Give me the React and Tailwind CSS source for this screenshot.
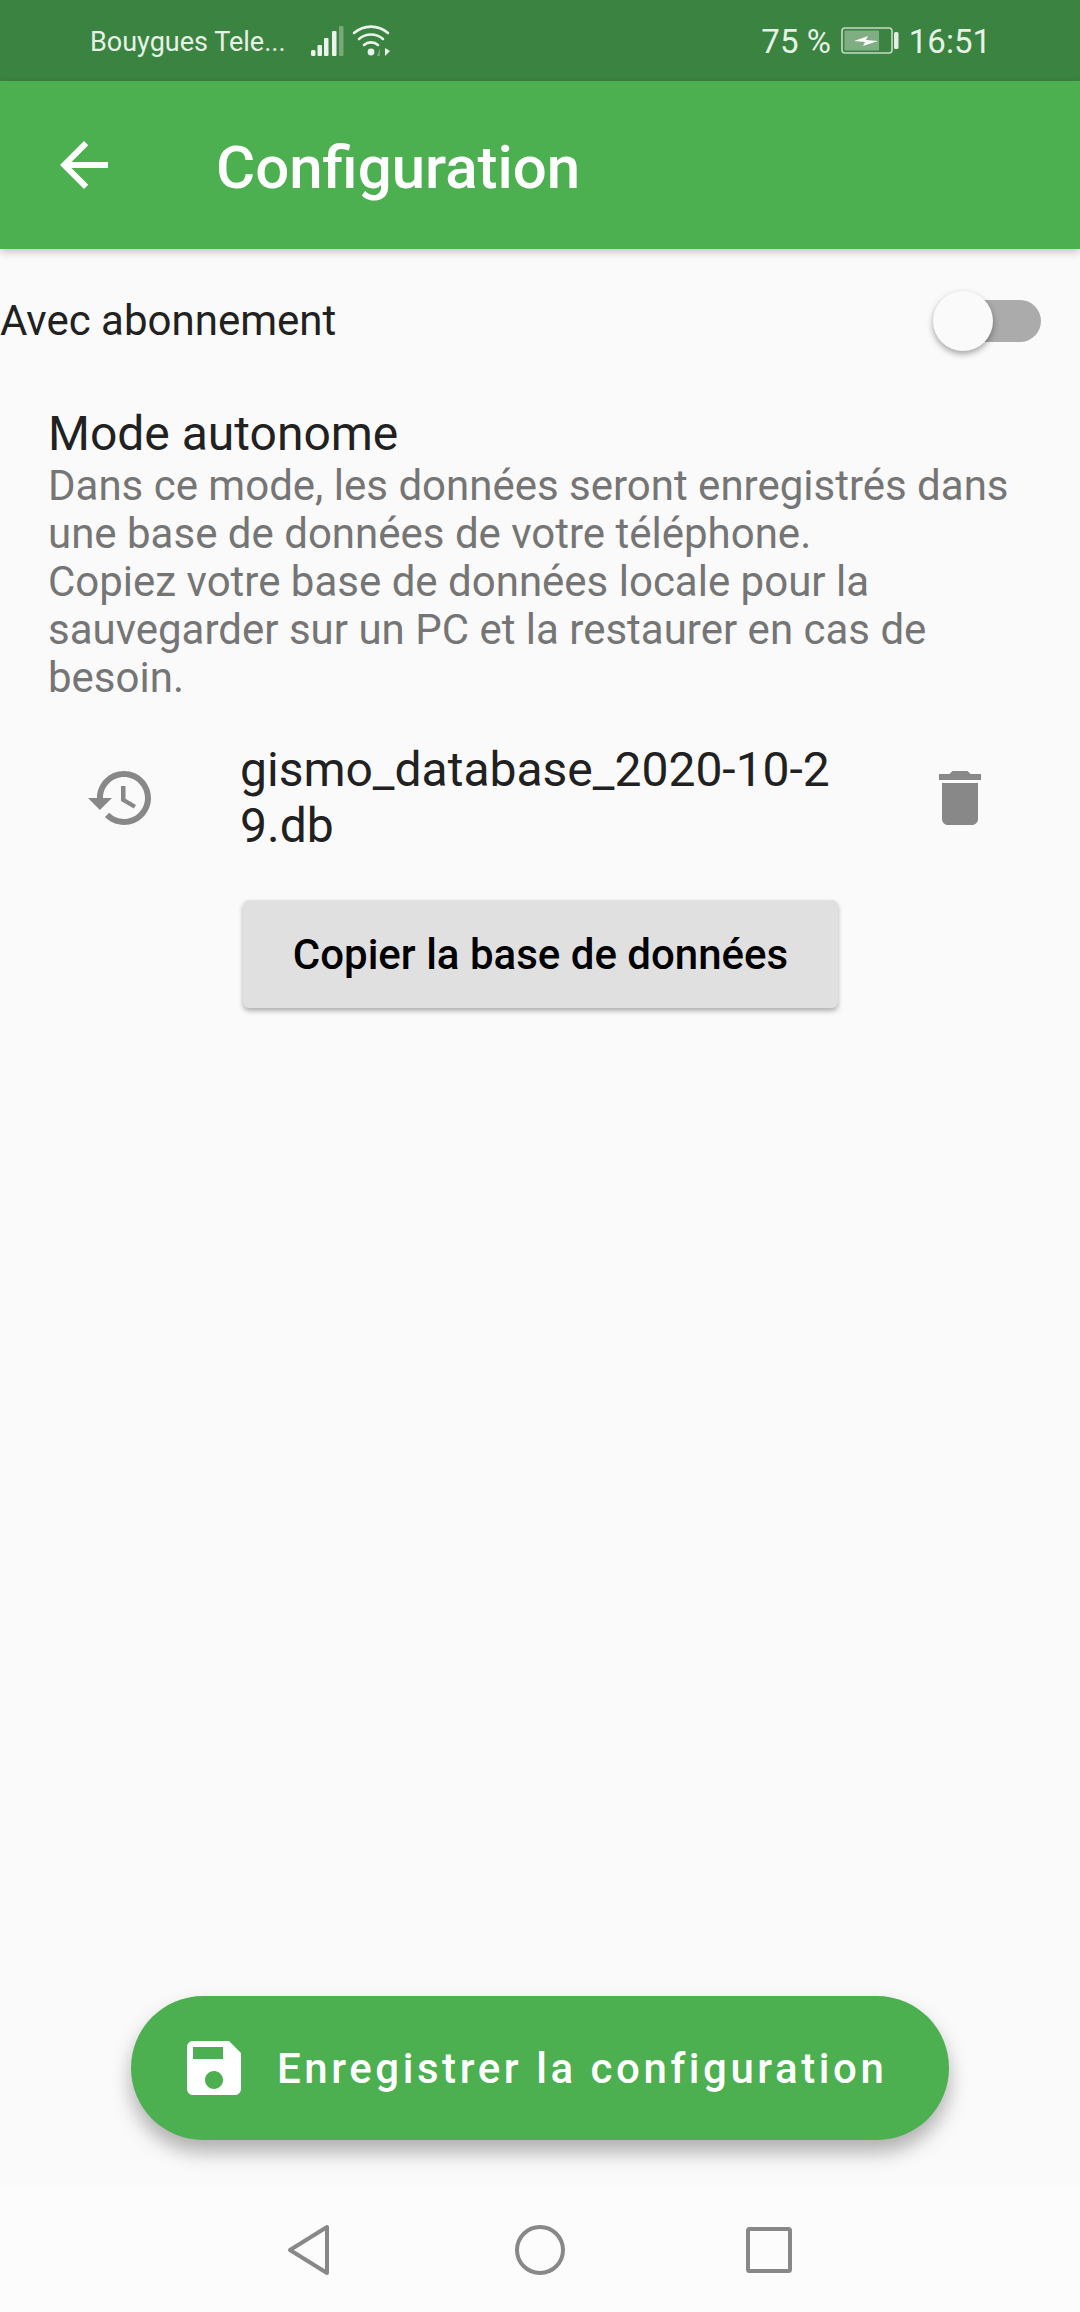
import { useState } from 'react'

const ROBOTO = { fontFamily: 'Roboto, "Noto Sans", sans-serif' }

function MaterialIcon({ d, className }) {
  return (
    <svg viewBox="0 0 24 24" className={className} fill="currentColor">
      <path d={d} />
    </svg>
  )
}

function SignalIcons() {
  return (
    <svg width="84" height="32" viewBox="0 0 84 32" className="ml-[28px] shrink-0">
      <g fill="#fff" fillOpacity="0.9">
        <rect x="1" y="25" width="4.5" height="6" rx="1.5" />
        <rect x="7.5" y="20" width="4.5" height="11" rx="1" />
        <rect x="14" y="13" width="4.5" height="18" rx="1" />
        <rect x="22" y="6" width="4.5" height="25" rx="1" />
      </g>
      <rect x="29" y="1" width="4.5" height="30" rx="1" fill="#fff" fillOpacity="0.3" />
      <g fill="none" stroke="#fff" strokeOpacity="0.9" strokeWidth="2.6" strokeLinecap="round">
        <path d="M44 8 C54 -0.5 68 -0.5 78 8" />
        <path d="M49 14 C56 8 66 8 73 14" />
        <path d="M54 20 C58 16.5 64 16.5 68 20" />
      </g>
      <circle cx="61" cy="27" r="3.4" fill="#fff" fillOpacity="0.9" />
      <path d="M70 23 L70 31 L67 31 Z" fill="#fff" fillOpacity="0.3" />
      <path d="M75 23 L75 31 L80 26 Z" fill="#fff" fillOpacity="0.9" />
    </svg>
  )
}

function BatteryIcon() {
  return (
    <svg width="58" height="28" viewBox="0 0 58 28" className="shrink-0">
      <rect x="1" y="1" width="50" height="25" rx="3" fill="none" stroke="#fff" strokeOpacity="0.7" strokeWidth="1.6" />
      <rect x="3.5" y="3.5" width="34.5" height="20" rx="1" fill="#fff" fillOpacity="0.35" />
      <path d="M13 14 L27 9 L25 13 L37 14 L22 19 L24 15 Z" fill="#fff" fillOpacity="0.95" />
      <rect x="53" y="5" width="4.5" height="17" rx="1.5" fill="#fff" fillOpacity="0.85" />
    </svg>
  )
}

function StatusBar() {
  return (
    <div className="h-[81px] shrink-0 bg-[#3b8340] flex items-center pl-[90px] pr-[89px] text-[#e6f2e6]">
      <span className="text-[27px] leading-none w-[192px] pt-[3px] whitespace-nowrap">Bouygues Tele...</span>
      <SignalIcons />
      <div className="ml-auto flex items-center">
        <span className="text-[33px] leading-none pt-[2px] mr-[10px] whitespace-nowrap">75 %</span>
        <BatteryIcon />
        <span className="text-[33px] leading-none pt-[2px] ml-[10px]">16:51</span>
      </div>
    </div>
  )
}

function AppBar() {
  return (
    <div className="relative z-10 h-[168px] shrink-0 bg-[#4caf50] flex items-center pl-[48px] text-white shadow-[0_3px_8px_rgba(0,0,0,0.22)]">
      <MaterialIcon
        className="w-[72px] h-[72px]"
        d="M20 11H7.83l5.59-5.59L12 4l-8 8 8 8 1.41-1.41L7.83 13H20v-2z"
      />
      <h1 className="ml-[96px] pt-[5px] text-[60px] leading-none font-medium">Configuration</h1>
    </div>
  )
}

function Toggle({ checked, onChange }) {
  return (
    <button
      onClick={() => onChange(!checked)}
      className="relative w-[84px] h-[42px] rounded-full bg-[#ababab] shrink-0"
    >
      <span className="absolute left-[-24px] top-[-9px] w-[60px] h-[60px] rounded-full bg-[#fafafa] shadow-[0_3px_6px_rgba(0,0,0,0.35)]" />
    </button>
  )
}

function NavBar() {
  return (
    <div className="h-[125px] shrink-0 bg-[#fcfcfc] flex items-start pt-[36px] pl-[286px]">
      <svg width="46" height="54" viewBox="0 0 46 54" fill="none" stroke="#888" strokeWidth="4" strokeLinejoin="round">
        <path d="M41 4 L41 50 L4 27 Z" />
      </svg>
      <svg width="54" height="54" viewBox="0 0 54 54" fill="none" stroke="#888" strokeWidth="4" className="ml-[181px]">
        <circle cx="27" cy="27" r="23" />
      </svg>
      <svg width="50" height="50" viewBox="0 0 50 50" fill="none" stroke="#888" strokeWidth="4" strokeLinejoin="round" className="ml-[177px] mt-[2px]">
        <rect x="4" y="4" width="42" height="42" rx="1.5" />
      </svg>
    </div>
  )
}

export default function App() {
  const [subscribed, setSubscribed] = useState(false)

  return (
    <div style={ROBOTO} className="w-[1080px] h-[2312px] flex flex-col bg-[#fafafa] overflow-hidden">
      <StatusBar />
      <AppBar />

      <main className="flex-1 flex flex-col">
        <div className="h-[144px] shrink-0 flex items-center justify-between pr-[39px]">
          <span className="text-[42px] leading-none text-[#212121]">Avec abonnement</span>
          <Toggle checked={subscribed} onChange={setSubscribed} />
        </div>

        <section className="px-[48px] pt-[13px]">
          <h2 className="text-[48px] leading-[56px] text-[#212121]">Mode autonome</h2>
          <p className="text-[42px] leading-[48px] text-[#757575]">
            Dans ce mode, les données seront enregistrés dans une base de données de votre téléphone.
            <br />
            Copiez votre base de données locale pour la sauvegarder sur un PC et la restaurer en cas de besoin.
          </p>
        </section>

        <div className="flex items-center pl-[85px] pr-[84px] mt-[40px]">
          <MaterialIcon
            className="w-[72px] h-[72px] text-[#888888] shrink-0"
            d="M13 3c-4.97 0-9 4.03-9 9H1l3.89 3.89.07.14L9 12H6c0-3.87 3.13-7 7-7s7 3.13 7 7-3.13 7-7 7c-1.93 0-3.68-.79-4.94-2.06l-1.42 1.42C8.27 19.99 10.51 21 13 21c4.97 0 9-4.03 9-9s-4.03-9-9-9zm-1 5v5l4.28 2.54.72-1.21-3.5-2.08V8H12z"
          />
          <span className="ml-[83px] w-[596px] text-[48px] leading-[56px] text-[#212121] break-all">
            gismo_database_2020-10-29.db
          </span>
          <MaterialIcon
            className="w-[72px] h-[72px] ml-auto text-[#888888] shrink-0"
            d="M6 19c0 1.1.9 2 2 2h8c1.1 0 2-.9 2-2V7H6v12zM19 4h-3.5l-1-1h-5l-1 1H5v2h14V4z"
          />
        </div>

        <button className="mt-[46px] ml-[243px] w-[595px] h-[108px] rounded-[6px] bg-[#e0e0e0] text-[42px] font-medium text-black shadow-[0_3px_5px_rgba(0,0,0,0.3)]">
          Copier la base de données
        </button>

        <button className="mt-auto mb-[47px] ml-[131px] w-[818px] h-[144px] rounded-full bg-[#4caf50] text-white flex items-center pl-[47px] shadow-[0_12px_20px_rgba(0,0,0,0.3)]">
          <MaterialIcon
            className="w-[72px] h-[72px] shrink-0"
            d="M17 3H5c-1.11 0-2 .9-2 2v14c0 1.1.89 2 2 2h14c1.1 0 2-.9 2-2V7l-4-4zm-5 16c-1.66 0-3-1.34-3-3s1.34-3 3-3 3 1.34 3 3-1.34 3-3 3zm3-10H5V5h10v4z"
          />
          <span className="ml-[27px] text-[42px] font-medium tracking-[3.56px] whitespace-nowrap">
            Enregistrer la configuration
          </span>
        </button>
      </main>

      <NavBar />
    </div>
  )
}
